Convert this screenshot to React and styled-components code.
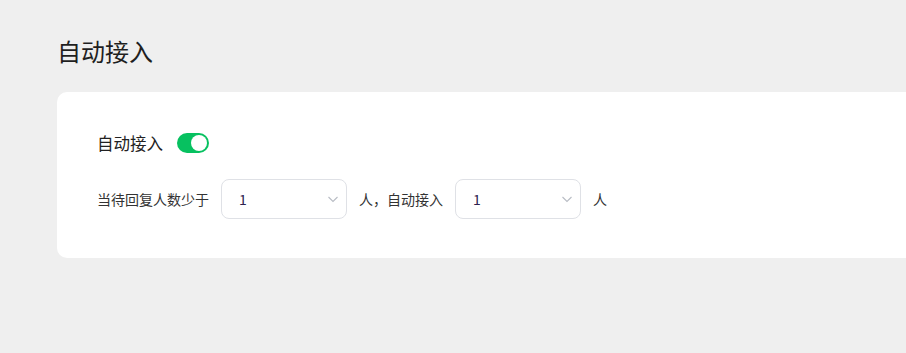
import React, { useState } from 'react';
import styled, { createGlobalStyle } from 'styled-components';

const GlobalStyle = createGlobalStyle`
  html, body {
    margin: 0;
    padding: 0;
    background: #efefef;
    overflow: hidden;
  }
  body {
    font-family: "Noto Sans CJK SC", "Liberation Sans", sans-serif;
    color: #222;
  }
`;

const Page = styled.div`
  padding: 28px 0 0 57px;
  width: 1100px;
  min-height: 353px;
  box-sizing: border-box;
`;

const PageTitle = styled.h1`
  margin: 0;
  font-size: 24px;
  font-weight: 400;
  line-height: 46px;
  color: #1f1f1f;
  height: 64px;
`;

const Card = styled.section`
  background: #fff;
  border-radius: 10px;
  padding: 39px 40px;
  box-sizing: border-box;
  height: 166px;
`;

const SwitchRow = styled.div`
  display: flex;
  align-items: center;
  gap: 14px;
  height: 24px;
`;

const SwitchLabel = styled.span`
  font-size: 16.5px;
  color: #222;
`;

const Toggle = styled.button`
  position: relative;
  width: 32px;
  height: 20px;
  border: none;
  border-radius: 10px;
  padding: 0;
  cursor: pointer;
  background: ${p => (p.$on ? '#07c160' : '#dcdfe6')};

  &::after {
    content: '';
    position: absolute;
    top: 2px;
    left: ${p => (p.$on ? '14px' : '2px')};
    width: 16px;
    height: 16px;
    border-radius: 50%;
    background: #fff;
  }
`;

const RuleRow = styled.div`
  display: flex;
  align-items: center;
  margin-top: 24px;
  font-size: 14px;
  color: #333;
`;

const Text = styled.span`
  margin-right: ${p => p.$gap || 12}px;
`;

const Select = styled.div`
  width: 126px;
  height: 40px;
  box-sizing: border-box;
  border: 1px solid #dfe1e6;
  border-radius: 8px;
  display: flex;
  align-items: center;
  justify-content: space-between;
  padding: 0 6px 0 17px;
  margin-right: 12px;
  font-size: 14px;
  color: #2d2250;
`;

const Chevron = () => (
  <svg width="14" height="14" viewBox="0 0 14 14" fill="none">
    <path d="M2.5 5 L7 9.5 L11.5 5" stroke="#b8bcc4" strokeWidth="1.1" />
  </svg>
);

const App = () => {
  const [enabled, setEnabled] = useState(true);

  return (
    <>
      <GlobalStyle />
      <Page>
        <PageTitle>自动接入</PageTitle>
        <Card>
          <SwitchRow>
            <SwitchLabel>自动接入</SwitchLabel>
            <Toggle $on={enabled} onClick={() => setEnabled(!enabled)} />
          </SwitchRow>
          <RuleRow>
            <Text $gap={12}>当待回复人数少于</Text>
            <Select>
              <span>1</span>
              <Chevron />
            </Select>
            <Text $gap={12}>人，自动接入</Text>
            <Select>
              <span>1</span>
              <Chevron />
            </Select>
            <Text>人</Text>
          </RuleRow>
        </Card>
      </Page>
    </>
  );
};

export default App;
